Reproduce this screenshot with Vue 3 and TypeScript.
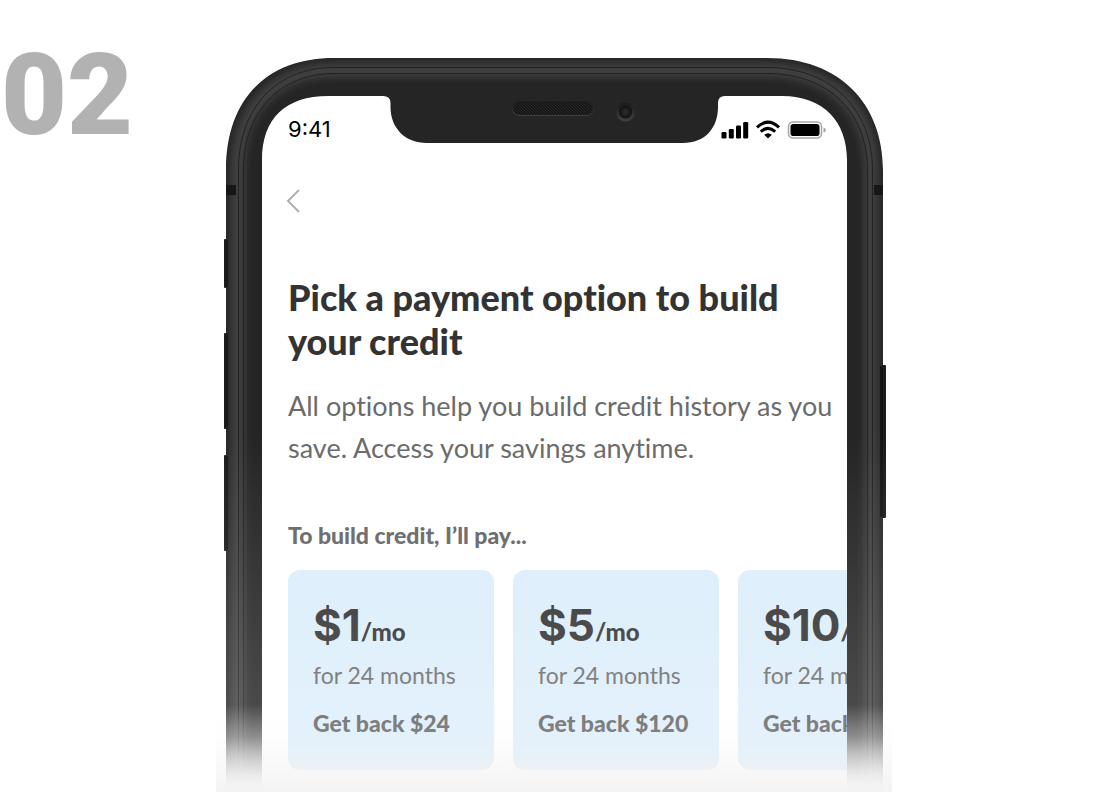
<script setup lang="ts">
interface PaymentOption {
  price: string
  term: string
  payout: string
}

const options: PaymentOption[] = [
  { price: '$1', term: 'for 24 months', payout: 'Get back $24' },
  { price: '$5', term: 'for 24 months', payout: 'Get back $120' },
  { price: '$10', term: 'for 24 months', payout: 'Get back $240' },
]
</script>

<template>
  <main class="page">
    <p class="step">02</p>
    <section class="device">
      <div class="screen">
        <header class="status">
          <span class="time">9:41</span>
          <svg class="indicators" viewBox="0 0 106 20" aria-hidden="true">
            <rect x="0.5" y="12" width="5" height="6.5" rx="1.2" />
            <rect x="7.8" y="9" width="5" height="9.5" rx="1.2" />
            <rect x="15" y="5.5" width="5" height="13" rx="1.2" />
            <rect x="22.2" y="2" width="5" height="16.5" rx="1.2" />
            <g fill="none" stroke="#000" stroke-width="3">
              <path d="M36 7.3Q47 -3 58 7.3" />
              <path d="M39.8 11.6Q47 5.2 54.2 11.6" />
            </g>
            <path d="M43.2 14.7Q47 11.6 50.8 14.7L47 18.6Z" />
            <rect x="67.5" y="2" width="33" height="16" rx="4.5" fill="none" stroke="#a6a6a6" stroke-width="1.5" />
            <rect x="69.5" y="4" width="29" height="12" rx="2.8" />
            <path d="M102.5 7.5Q105 8 105 10Q105 12 102.5 12.5Z" fill="#a6a6a6" />
          </svg>
        </header>
        <button class="back" type="button" aria-label="Back">
          <svg viewBox="0 0 14 26" aria-hidden="true">
            <path d="M13 2L2 13L13 24" fill="none" stroke="#b0b0b0" stroke-width="2" />
          </svg>
        </button>
        <h1>Pick a payment option to build your credit</h1>
        <p class="intro">All options help you build credit history as you save. Access your savings anytime.</p>
        <h2>To build credit, I’ll pay...</h2>
        <div class="options">
          <button v-for="option in options" :key="option.price" class="option" type="button">
            <span class="price"><strong>{{ option.price }}</strong><span class="per">/mo</span></span>
            <span class="term">{{ option.term }}</span>
            <span class="payout">{{ option.payout }}</span>
          </button>
        </div>
      </div>

      <svg class="frame" viewBox="0 0 676 792" aria-hidden="true">
        <defs>
          <clipPath id="body">
            <path
              clip-rule="evenodd"
              d="M10 800V170C10 96 54 58 118 58H551C624 58 667 104 667 170V800ZM46 800V160C46 118 70 96 112 96H167Q174.5 96 174.5 103V107C174.5 128 189 143 211 143H467C489 143 502 128 502 107V103Q502 96 509 96H566C608 96 631 122 631 160V800Z"
            />
          </clipPath>
          <filter id="soft" x="-10%" y="-10%" width="120%" height="120%">
            <feGaussianBlur stdDeviation="4" />
          </filter>
          <pattern id="mesh" width="3" height="3" patternUnits="userSpaceOnUse">
            <rect width="3" height="3" fill="#151515" />
            <path d="M0 0L3 3" stroke="#303030" stroke-width="0.8" />
          </pattern>
          <linearGradient id="rim" x1="0" y1="0" x2="0" y2="1">
            <stop offset="0" stop-color="#191919" />
            <stop offset="1" stop-color="#424242" />
          </linearGradient>
          <radialGradient id="lens">
            <stop offset="0" stop-color="#303030" />
            <stop offset="1" stop-color="#101010" />
          </radialGradient>
        </defs>
        <g fill="#1c1c1c">
          <rect x="8" y="239" width="5" height="49" rx="1" />
          <rect x="8" y="333" width="5" height="96" rx="1" />
          <rect x="8" y="455" width="5" height="96" rx="1" />
          <rect x="664" y="365" width="6" height="153" rx="1" />
        </g>
        <g clip-path="url(#body)">
          <rect width="676" height="800" fill="#252525" />
          <path
            d="M22 850V170C22 108 60 70 118 70H551C618 70 655 112 655 170V850"
            fill="none" stroke="#424242" stroke-width="13" filter="url(#soft)"
          />
          <g fill="none" stroke="#222" stroke-width="1">
            <path d="M22.5 800V170C22.5 108 60 67.5 118 67.5H551C618 67.5 656.5 112 656.5 170V800" />
            <path d="M27.5 800V170C27.5 111 65 73.5 118 73.5H551C615 73.5 651.5 115 651.5 170V800" />
          </g>
          <rect x="10" y="185" width="10" height="10" fill="#161616" />
          <rect x="658" y="185" width="10" height="10" fill="#161616" />
          <rect x="10" y="240" width="2" height="47" fill="#191919" />
          <rect x="10" y="334" width="2" height="94" fill="#191919" />
          <rect x="10" y="456" width="2" height="94" fill="#191919" />
          <rect x="664" y="366" width="3" height="151" fill="#151515" />
        </g>
        <rect x="296.5" y="102" width="81" height="13.5" rx="6.7" fill="url(#mesh)" stroke="url(#rim)" />
        <circle cx="409.5" cy="112" r="9.5" fill="url(#rim)" />
        <circle cx="409.5" cy="112" r="6.5" fill="url(#lens)" />
      </svg>
      <div class="fade"></div>
    </section>
  </main>
</template>

<style>
body {
  margin: 0;
  background: #fff;
}
</style>

<style scoped>
.page {
  display: grid;
  grid-template-columns: 216px minmax(0, 676px) 1fr;
  height: 100vh;
  overflow: hidden;
  font-family: Lato, "Liberation Sans", sans-serif;
  font-variant-ligatures: none;
  color: #333;
}

p,
h1,
h2 {
  margin: 0;
}

button {
  border: 0;
  padding: 0;
  font: inherit;
  color: inherit;
  text-align: left;
}

.step {
  padding: 29px 0 0 1px;
  font: 900 114px/132px Roboto, sans-serif;
  color: #b2b2b2;
}

.device {
  position: relative;
}

.screen {
  box-sizing: border-box;
  margin: 96px 45px 0 46px;
  padding-left: 26px;
  overflow: hidden;
}

.status {
  display: flex;
  align-items: center;
  justify-content: space-between;
  height: 66px;
  padding-right: 20px;
}

.time {
  font: 400 22px/24px Inter, sans-serif;
  color: #000;
}

.indicators {
  width: 106px;
  height: 20px;
  margin-top: 2px;
}

.back {
  display: block;
  width: 24px;
  height: 26px;
  margin: 26px 0 61px -2px;
  background: none;
}

.back svg {
  display: block;
  width: 14px;
  height: 26px;
}

h1 {
  max-width: 540px;
  font-size: 36px;
  font-weight: 900;
  line-height: 44px;
}

.intro {
  margin-top: 22px;
  font-size: 27px;
  line-height: 42px;
  color: #6b6b6b;
}

h2 {
  margin: 52px 0 21px;
  font-size: 23px;
  font-weight: 900;
  line-height: 28px;
  color: #666;
}

.options {
  display: flex;
  gap: 19px;
}

.option {
  display: flex;
  flex: 0 0 206px;
  flex-direction: column;
  box-sizing: border-box;
  height: 200px;
  padding: 31px 0 0 25px;
  border-radius: 12px;
  background: #dceefb;
  white-space: nowrap;
}

.price {
  display: flex;
  align-items: baseline;
  line-height: 48px;
}

.price strong {
  font-family: Inter, sans-serif;
  font-size: 44px;
  font-weight: 700;
}

.per {
  font-size: 24px;
  font-weight: 900;
  line-height: 24px;
}

.term {
  margin-top: 10px;
  font-size: 23px;
  line-height: 32px;
  color: #6b6b6b;
}

.payout {
  margin-top: 16px;
  font-size: 23px;
  font-weight: 900;
  line-height: 32px;
  color: #5c5c5c;
}

.frame {
  position: absolute;
  top: 0;
  left: 0;
  width: 100%;
  pointer-events: none;
  mask-image: linear-gradient(#000 89%, rgba(0, 0, 0, 0.6) 94%, transparent 100%);
}

.fade {
  position: absolute;
  inset: 0;
  background: linear-gradient(
    rgba(255, 255, 255, 0) 55%,
    rgba(255, 255, 255, 0.17) 89%,
    rgba(250, 250, 250, 0.24) 93%,
    rgba(244, 244, 244, 0.6) 97%,
    #f3f3f3 100%
  );
  pointer-events: none;
}
</style>
